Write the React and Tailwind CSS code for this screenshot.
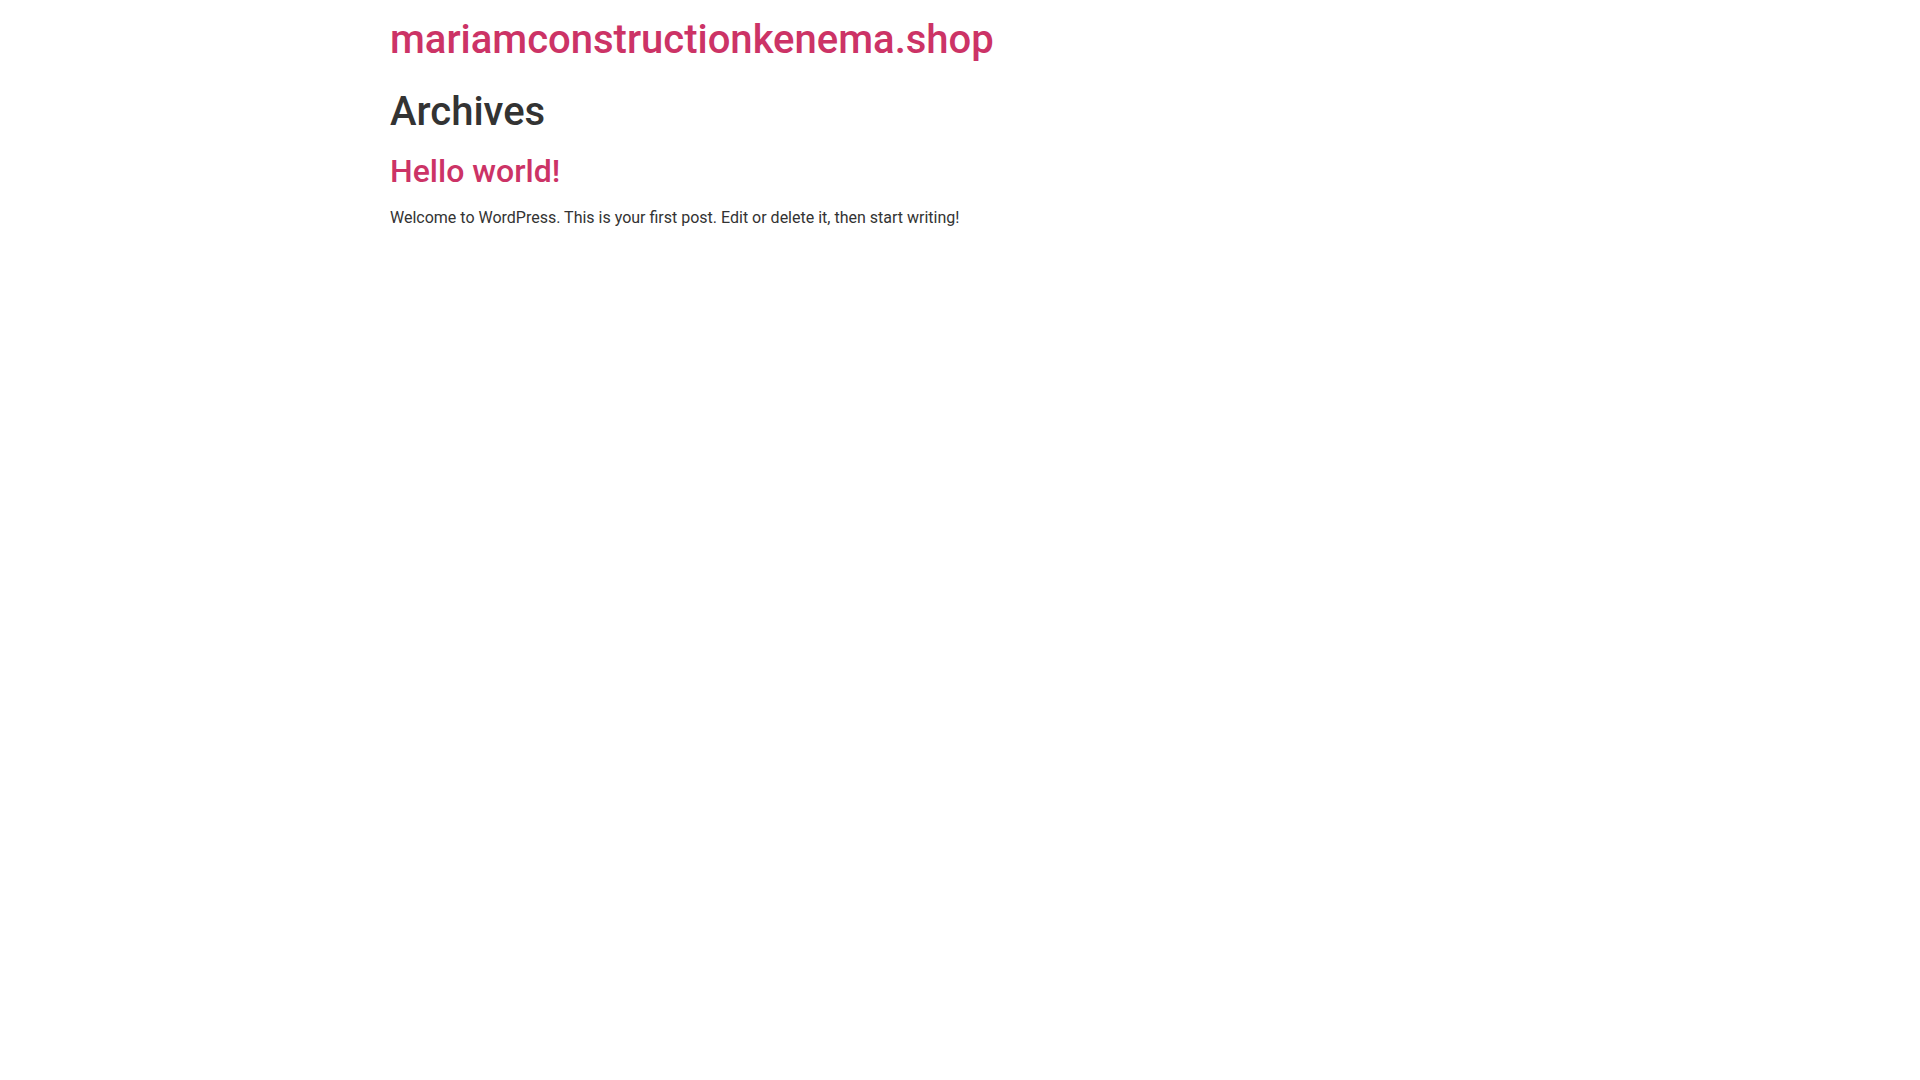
export default function App() {
  return (
    <div className="min-h-screen bg-white font-['Roboto',sans-serif] text-base leading-normal text-[#333]">
      <header className="mx-auto flex max-w-[1140px] justify-between py-4">
        <div className="text-[40px] font-medium leading-[1.2]">
          <a href="#" className="text-[#c36]">mariamconstructionkenema.shop</a>
        </div>
      </header>
      <main className="mx-auto max-w-[1140px]">
        <div>
          <h1 className="mt-2 mb-4 text-[40px] font-medium leading-[1.2]">Archives</h1>
        </div>
        <div>
          <article>
            <h2 className="mb-4 text-[32px] font-medium leading-[1.2]">
              <a href="#" className="text-[#c36]">Hello world!</a>
            </h2>
            <p>Welcome to WordPress. This is your first post. Edit or delete it, then start writing!</p>
          </article>
        </div>
      </main>
    </div>
  );
}
